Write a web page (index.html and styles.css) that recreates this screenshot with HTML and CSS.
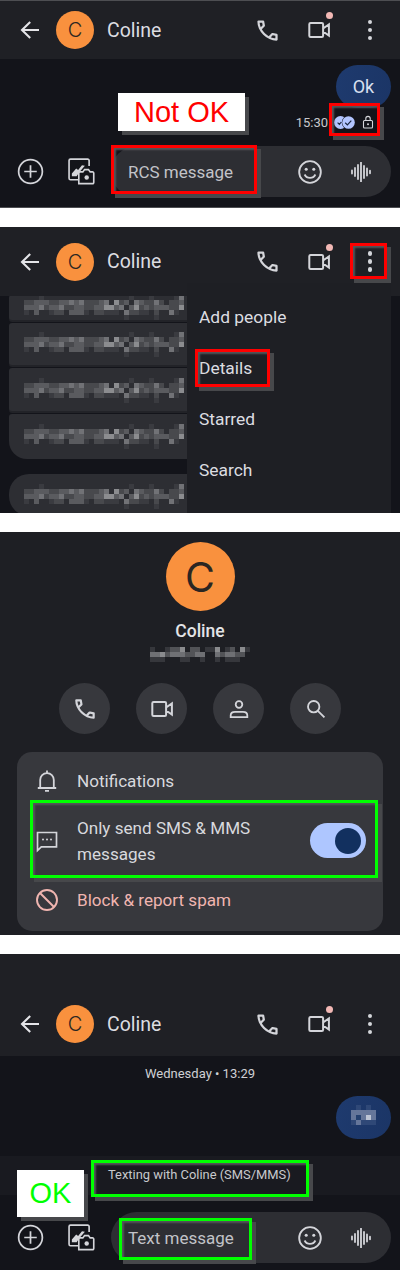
FILE: index.html
```html
<!DOCTYPE html>
<html lang="en">
<head>
<meta charset="utf-8">
<title>Messages: RCS to SMS</title>
<link rel="stylesheet" href="styles.css">
</head>
<body>
<svg class="sprite" aria-hidden="true">
  <symbol id="i-back" viewBox="0 0 24 24"><path d="M21 12H4.500M12.200 4 4 12l8.200 8" fill="none" stroke="currentColor" stroke-width="2.100"/></symbol>
  <symbol id="i-phone" viewBox="0 0 24 24"><path fill="currentColor" d="M19.95 21q-3.125 0-6.175-1.362-3.05-1.363-5.55-3.863-2.5-2.5-3.862-5.55Q3 7.175 3 4.05q0-.45.3-.75t.75-.3H8.1q.35 0 .625.238.275.237.325.562l.65 3.5q.05.4-.025.675-.075.275-.275.475L6.975 10.9q.5.925 1.187 1.787.688.863 1.513 1.663.775.775 1.625 1.438.85.662 1.8 1.212l2.35-2.35q.225-.225.588-.337.362-.113.712-.063l3.45.7q.35.1.575.363.225.262.225.587v4.05q0 .45-.3.75t-.75.3ZM6.025 9l1.65-1.65L7.25 5H5.025q.125 1.025.35 2.025.225 1 .65 1.975Zm8.95 8.95q.975.425 1.988.675 1.012.25 2.037.325v-2.2l-2.35-.475Z"/></symbol>
  <symbol id="i-video" viewBox="0 0 24 24"><path d="M3.600 5h11.200a1.300 1.300 0 0 1 1.300 1.300v11.400a1.300 1.300 0 0 1-1.300 1.300H3.600a1.300 1.300 0 0 1-1.300-1.300V6.300a1.300 1.300 0 0 1 1.300-1.300ZM16.100 10.500 21.900 6.500v11l-5.800-4" fill="none" stroke="currentColor" stroke-width="2"/></symbol>
  <symbol id="i-person" viewBox="0 0 24 24"><circle cx="12" cy="7.500" r="3.300" fill="none" stroke="currentColor" stroke-width="1.800"/><path d="M8 14.800h8c2.500 0 4.300 1.500 4.300 3.500v1.800H3.700v-1.800c0-2 1.800-3.500 4.300-3.500Z" fill="none" stroke="currentColor" stroke-width="1.800"/></symbol>
  <symbol id="i-search" viewBox="0 0 24 24"><circle cx="9.500" cy="9.500" r="6.200" fill="none" stroke="currentColor" stroke-width="2"/><path d="m14 14 7.200 7.200" fill="none" stroke="currentColor" stroke-width="2"/></symbol>
  <symbol id="i-bell" viewBox="0 0 24 24"><path d="M5.200 18.500V11c0-3.800 2.900-6.900 6.800-6.900s6.800 3.100 6.800 6.900v7.500M2.800 19h18.400M12 1.500v2.600M10 21.800h4" fill="none" stroke="currentColor" stroke-width="1.800"/></symbol>
  <symbol id="i-chat" viewBox="0 0 24 24"><path d="M2.500 3.500h19v14.300H6.300L2.500 21.500Z" fill="none" stroke="currentColor" stroke-width="1.700"/><circle cx="8" cy="10.500" r="1" fill="currentColor"/><circle cx="12" cy="10.500" r="1" fill="currentColor"/><circle cx="16" cy="10.500" r="1" fill="currentColor"/></symbol>
  <symbol id="i-block" viewBox="0 0 24 24"><circle cx="12" cy="12" r="10" fill="none" stroke="currentColor" stroke-width="1.900"/><path d="m5 5 14 14" fill="none" stroke="currentColor" stroke-width="1.900"/></symbol>
  <symbol id="i-plus" viewBox="0 0 28 28"><circle cx="14" cy="14" r="12.300" fill="none" stroke="currentColor" stroke-width="1.800"/><path d="M14 7.500v13M7.500 14h13" fill="none" stroke="currentColor" stroke-width="1.800"/></symbol>
  <symbol id="i-gallery" viewBox="0 0 28 28"><path d="M10.500 22.500H2.600a1.500 1.500 0 0 1-1.500-1.500V2.600a1.500 1.500 0 0 1 1.500-1.500h17.800a1.500 1.500 0 0 1 1.500 1.500v5.600" fill="none" stroke="currentColor" stroke-width="1.700"/><path d="M4 19v-3l4.500-5 2 1.500 4-5 3 .5-6 7-2.500 4Z" fill="currentColor"/><path d="M11.500 26.800v-11a1.200 1.200 0 0 1 1.200-1.200h3l1.800-2.400h4l1.800 2.400h2.500a1.200 1.200 0 0 1 1.200 1.200v9.800a1.200 1.200 0 0 1-1.200 1.200Z" fill="none" stroke="currentColor" stroke-width="1.700" transform="translate(-.3 -.2)"/><circle cx="19.400" cy="20.300" r="2.300" fill="currentColor"/></symbol>
  <symbol id="i-emoji" viewBox="0 0 24 24"><circle cx="12" cy="12" r="10" fill="none" stroke="currentColor" stroke-width="1.700"/><circle cx="8.500" cy="9.500" r="1.400" fill="currentColor"/><circle cx="15.500" cy="9.500" r="1.400" fill="currentColor"/><path d="M7 14.300c1 2 2.800 3.100 5 3.100s4-1.100 5-3.100" fill="none" stroke="currentColor" stroke-width="1.600"/></symbol>
  <symbol id="i-wave" viewBox="0 0 20 20"><path d="M1 8.500v3M4 6v8M7 3v14M10 0.500v19M13 4v12M16 6.500v7M19 8.700v2.600" fill="none" stroke="currentColor" stroke-width="1.800" stroke-linecap="round"/></symbol>
  <symbol id="i-lock" viewBox="0 0 12 14"><rect x="1.500" y="5.500" width="9" height="7.500" rx="1" fill="none" stroke="currentColor" stroke-width="1.100"/><path d="M3.800 5.500V3.600a2.200 2.200 0 0 1 4.400 0v1.900" fill="none" stroke="currentColor" stroke-width="1.100"/><circle cx="6" cy="9.200" r="1" fill="currentColor"/></symbol>
  <symbol id="i-checks" viewBox="0 0 21 13"><circle cx="6.500" cy="6.500" r="6.500" fill="#b2c5ff"/><circle cx="14.500" cy="6.500" r="6.800" fill="#13141a"/><circle cx="14.500" cy="6.500" r="6.300" fill="#b2c5ff"/><path d="m3.600 6.600 1.800 1.800 1.900-2.400M11.200 6.800l2.200 2.100 3.900-4.200" fill="none" stroke="#1a2740" stroke-width="1.200"/></symbol>
  <symbol id="m-text" viewBox="0 0 165 25"><g fill="none" stroke-width="5" shape-rendering="crispEdges">
    <path stroke="#3a3b40" d="M15 2.500h5M105 2.500h5M125 2.500h5M150 2.500h5M0 17.500h5M25 17.500h15M60 17.500h5M80 17.500h15M115 17.500h10M145 17.500h10M100 22.500h5M130 22.500h5"/>
    <path stroke="#48494d" d="M0 7.500h10M25 7.500h10M60 7.500h15M95 7.500h5M120 7.500h20M145 7.500h10M15 12.500h10M40 12.500h10M60 12.500h10M80 12.500h5M115 12.500h5M125 12.500h5M145 12.500h15M30 17.500h10M70 17.500h10M105 17.500h10M130 17.500h5"/>
    <path stroke="#5a5b5f" d="M10 7.500h15M35 7.500h10M50 7.500h5M75 7.500h5M100 7.500h5M115 7.500h5M155 7.500h5M0 12.500h15M25 12.500h15M50 12.500h10M70 12.500h10M85 12.500h10M105 12.500h10M120 12.500h5M130 12.500h15M10 17.500h5M45 17.500h15"/>
    <path stroke="#717276" d="M45 7.500h5M55 7.500h5M80 7.500h5M110 7.500h5M15 12.500h5M35 12.500h5M95 12.500h5M100 17.500h5M130 7.500h5M145 17.500h5M155 2.500h5"/>
    <path stroke="#8b8c8f" d="M80 12.500h10M90 7.500h5M110 12.500h5M155 12.500h5"/>
  </g></symbol>
  <symbol id="m-number" viewBox="0 0 100 15"><g fill="none" stroke-width="5" shape-rendering="crispEdges">
    <path stroke="#36373c" d="M0 2.500h5M15 2.500h5M55 2.500h10M75 2.500h5M95 2.500h5M0 12.500h15M30 12.500h10M50 12.500h5M65 12.500h5M75 12.500h15"/>
    <path stroke="#525357" d="M20 2.500h10M40 2.500h10M80 2.500h5M15 7.500h5M35 7.500h10M70 7.500h5M85 7.500h10"/>
    <path stroke="#6f7074" d="M0 7.500h10M20 7.500h15M45 7.500h10M65 7.500h5M75 7.500h10"/>
    <path stroke="#8a8b8e" d="M30 2.500h5M65 2.500h5M90 2.500h5M10 7.500h5"/>
  </g></symbol>
  <symbol id="m-bubble" viewBox="0 0 25 25"><g fill="none" stroke-width="5" shape-rendering="crispEdges">
    <path stroke="#2f4877" d="M5 2.500h5M15 2.500h5M0 17.500h5M10 17.500h15"/>
    <path stroke="#65769a" d="M0 7.500h25M0 12.500h5M10 12.500h5M20 12.500h5M5 17.500h5"/>
    <path stroke="#bcc4d4" d="M15 12.500h5"/>
    <path stroke="#24406f" d="M5 12.500h5"/>
  </g></symbol>
</svg>

<section class="panel panel-rcs">
  <header class="topbar">
    <svg class="ico back"><use href="#i-back"/></svg>
    <span class="avatar">C</span>
    <span class="name">Coline</span>
    <div class="actions">
      <span class="action"><svg class="ico phone"><use href="#i-phone"/></svg></span>
      <span class="action badge"><svg class="ico video"><use href="#i-video"/></svg></span>
      <span class="action"><span class="dots"></span></span>
    </div>
  </header>
  <div class="thread">
    <div class="sent">Ok</div>
    <div class="meta">
      <span>15:30</span>
      <svg class="checks"><use href="#i-checks"/></svg>
      <svg class="lock"><use href="#i-lock"/></svg>
    </div>
  </div>
  <div class="composer">
    <svg class="ico plus"><use href="#i-plus"/></svg>
    <svg class="ico gallery"><use href="#i-gallery"/></svg>
    <div class="field">
      <span class="placeholder">RCS message</span>
      <svg class="ico emoji"><use href="#i-emoji"/></svg>
      <svg class="ico wave"><use href="#i-wave"/></svg>
    </div>
  </div>
  <div class="label label-bad label-notok">Not OK</div>
  <div class="mark mark-red m-status"></div>
  <div class="mark mark-red m-rcs"></div>
</section>

<section class="panel panel-menu">
  <header class="topbar">
    <svg class="ico back"><use href="#i-back"/></svg>
    <span class="avatar">C</span>
    <span class="name">Coline</span>
    <div class="actions">
      <span class="action"><svg class="ico phone"><use href="#i-phone"/></svg></span>
      <span class="action badge"><svg class="ico video"><use href="#i-video"/></svg></span>
      <span class="action"><span class="dots"></span></span>
    </div>
  </header>
  <div class="received-list">
    <div class="received r1"><svg class="mosaic"><use href="#m-text"/></svg></div>
    <div class="received r2"><svg class="mosaic"><use href="#m-text"/></svg></div>
    <div class="received r3"><svg class="mosaic"><use href="#m-text"/></svg></div>
    <div class="received r4"><svg class="mosaic"><use href="#m-text"/></svg></div>
    <div class="received r5"><svg class="mosaic"><use href="#m-text"/></svg></div>
  </div>
  <ul class="menu">
    <li>Add people</li>
    <li>Details</li>
    <li>Starred</li>
    <li>Search</li>
  </ul>
  <div class="mark mark-red m-more"></div>
  <div class="mark mark-red m-details"></div>
</section>

<section class="panel panel-details">
  <div class="profile">
    <span class="avatar avatar-large">C</span>
    <h1 class="profile-name">Coline</h1>
    <svg class="number"><use href="#m-number"/></svg>
    <div class="quick">
      <span class="quick-btn"><svg class="ico q-phone"><use href="#i-phone"/></svg></span>
      <span class="quick-btn"><svg class="ico q-video"><use href="#i-video"/></svg></span>
      <span class="quick-btn"><svg class="ico q-person"><use href="#i-person"/></svg></span>
      <span class="quick-btn"><svg class="ico q-search"><use href="#i-search"/></svg></span>
    </div>
  </div>
  <div class="card">
    <div class="row row-notif">
      <svg class="ico row-ico"><use href="#i-bell"/></svg>
      <span>Notifications</span>
    </div>
    <div class="row row-sms">
      <svg class="ico row-ico"><use href="#i-chat"/></svg>
      <span class="row-text">Only send SMS &amp; MMS<br>messages</span>
      <span class="toggle"><span class="knob"></span></span>
    </div>
    <div class="row row-block">
      <svg class="ico row-ico"><use href="#i-block"/></svg>
      <span>Block &amp; report spam</span>
    </div>
  </div>
  <div class="mark mark-green m-sms"></div>
</section>

<section class="panel panel-sms">
  <header class="topbar">
    <svg class="ico back"><use href="#i-back"/></svg>
    <span class="avatar">C</span>
    <span class="name">Coline</span>
    <div class="actions">
      <span class="action"><svg class="ico phone"><use href="#i-phone"/></svg></span>
      <span class="action badge"><svg class="ico video"><use href="#i-video"/></svg></span>
      <span class="action"><span class="dots"></span></span>
    </div>
  </header>
  <div class="thread thread-sms">
    <p class="timestamp">Wednesday • 13:29</p>
    <div class="sent sent-hidden"><svg class="mosaic-small"><use href="#m-bubble"/></svg></div>
  </div>
  <p class="notice">Texting with Coline (SMS/MMS)</p>
  <div class="composer">
    <svg class="ico plus"><use href="#i-plus"/></svg>
    <svg class="ico gallery"><use href="#i-gallery"/></svg>
    <div class="field">
      <span class="placeholder">Text message</span>
      <svg class="ico emoji"><use href="#i-emoji"/></svg>
      <svg class="ico wave"><use href="#i-wave"/></svg>
    </div>
  </div>
  <div class="label label-good label-ok">OK</div>
  <div class="mark mark-green m-notice"></div>
  <div class="mark mark-green m-text"></div>
</section>
</body>
</html>
```
FILE: styles.css
```css
* { box-sizing: border-box; }
html, body { margin: 0; padding: 0; background: #fff; }
body {
  width: 400px;
  height: 1270px;
  overflow: hidden;
  font-family: Roboto, "Noto Sans", sans-serif;
  color: #d9dade;
}
.sprite { position: absolute; width: 0; height: 0; overflow: hidden; }
.ico { display: block; color: #d4d5da; flex: none; }

.panel { position: relative; overflow: hidden; display: flex; flex-direction: column; background: #13141a; }
.panel-rcs { height: 208px; border-top: 1px solid #4d4e52; border-bottom: 1px solid #4d4e52; }
.panel-menu { height: 286px; margin-top: 19px; }
.panel-details { height: 403px; margin-top: 19px; background: #1e1f24; }
.panel-sms { height: 316px; margin-top: 19px; }

/* top bar */
.topbar { flex: none; display: flex; align-items: center; height: 69px; padding: 0 5px 0 18px; background: #1f2025; }
.panel-rcs .topbar { height: 58px; }
.panel-sms .topbar { height: 102px; padding-top: 38px; }
.back { width: 24px; height: 24px; color: #e4e4e8; }
.avatar {
  flex: none;
  width: 38px;
  height: 38px;
  margin-left: 14px;
  border-radius: 50%;
  background: #f9913e;
  color: #2b2622;
  display: flex;
  align-items: center;
  justify-content: center;
  font-family: Inter, Roboto, sans-serif;
  font-size: 20px;
  font-weight: 300;
}
.name { margin-left: 13px; font-size: 19.5px; color: #dcdde1; }
.actions { margin-left: auto; display: flex; }
.action { position: relative; width: 52px; height: 40px; display: flex; align-items: center; justify-content: center; }
.action:last-child { width: 50px; }
.phone { width: 27px; height: 27px; }
.video { width: 24px; height: 24px; }
.badge::after { content: ""; position: absolute; top: 2px; right: 12px; width: 7px; height: 7px; border-radius: 50%; background: #f2b8b5; }
.dots, .dots::before, .dots::after { display: block; width: 4.5px; height: 4.5px; border-radius: 50%; background: #d4d5da; }
.dots { position: relative; }
.dots::before, .dots::after { content: ""; position: absolute; left: 0; }
.dots::before { top: -8px; }
.dots::after { top: 8px; }

/* thread */
.thread { flex: 1; display: flex; flex-direction: column; align-items: flex-end; padding: 6px 9px 0; min-height: 0; }
.sent {
  width: 55px;
  height: 43px;
  border-radius: 22px;
  background: linear-gradient(100deg, #1e3a6e, #1b3566);
  color: #d8e0ef;
  font-size: 18px;
  display: flex;
  align-items: center;
  justify-content: center;
}
.meta { display: flex; align-items: center; margin-top: 6px; padding-right: 17px; font-size: 13px; color: #c8c9cd; height: 16px; }
.checks { width: 21px; height: 13px; margin-left: 6px; }
.lock { width: 12px; height: 14px; margin-left: 7px; color: #d4d5da; }

/* composer */
.composer { flex: none; display: flex; align-items: center; height: 61px; padding: 0 9px 10px 17px; }
.plus { width: 27px; height: 27px; }
.gallery { width: 27px; height: 27px; margin-left: 24px; }
.field { flex: 1; height: 51px; margin-left: 16px; border-radius: 26px; background: #2d2e33; display: flex; align-items: center; padding: 0 20px 0 17px; }
.placeholder { font-size: 17px; color: #c2c3c8; }
.emoji { width: 26px; height: 26px; margin-left: auto; }
.wave { width: 20px; height: 20px; margin-left: 28px; }

/* received bubbles */
.received-list { flex: 1; display: flex; flex-direction: column; padding-left: 9px; overflow: hidden; }
.received { flex: none; width: 190px; padding: 10px 0 0 15px; background: #2d2e33; border-radius: 3px 0 0 3px; margin-bottom: 3px; box-shadow: 0 2px 0 #222328; }
.mosaic { display: block; width: 165px; height: 25px; }
.r1 { height: 25px; padding-top: 0; margin-top: -1px; }
.r2 { height: 42px; padding-top: 9px; }
.r3 { height: 43px; padding-top: 10px; }
.r4 { height: 45px; padding-top: 10px; border-bottom-left-radius: 18px; margin-bottom: 15px; box-shadow: none; }
.r5 { height: 42px; border-radius: 20px 0 0 20px; padding-top: 10px; box-shadow: none; }

/* menu */
.menu { position: absolute; left: 187px; top: 56px; right: 9px; bottom: 0; margin: 0; padding: 8px 0 0 12px; list-style: none; background: #1e1f24; }
.menu li { height: 51px; display: flex; align-items: center; font-size: 17.4px; color: #dcdde1; }

/* details */
.profile { display: flex; flex-direction: column; align-items: center; padding-top: 10px; }
.avatar-large { width: 69px; height: 69px; margin: 0; font-size: 41px; font-weight: 400; }
.profile-name { margin: 10px 0 0; font-size: 17.5px; line-height: 21px; font-weight: 500; color: #e3e4e7; }
.number { display: block; width: 100px; height: 15px; margin-top: 5px; }
.quick { display: flex; gap: 26px; margin-top: 21px; }
.quick-btn { width: 51px; height: 51px; border-radius: 50%; background: #37383d; display: flex; align-items: center; justify-content: center; }
.q-phone { width: 26px; height: 26px; }
.q-video { width: 24px; height: 24px; }
.q-person { width: 24px; height: 24px; }
.q-search { width: 22px; height: 22px; }
.card { margin: 18px 17px 0; height: 179px; border-radius: 15px; background: #37383d; padding-top: 7px; }
.row { display: flex; align-items: center; padding-left: 18px; font-size: 17.1px; color: #d8d9dd; }
.row-ico { width: 24px; height: 24px; margin-right: 18px; }
.row-notif { height: 44px; }
.row-sms { height: 76px; position: relative; }
.row-text { line-height: 26px; }
.row-block { height: 42px; color: #f0b5b0; }
.row-block .row-ico { color: #f0b5b0; }
.toggle { position: absolute; left: 293px; top: 20px; width: 56px; height: 35px; border-radius: 18px; background: #aec6ff; }
.knob { position: absolute; left: 25px; top: 5px; width: 26px; height: 26px; border-radius: 50%; background: #12305f; }

/* sms panel */
.thread-sms { padding: 0 9px; }
.timestamp { align-self: center; margin: 10px 0 0; font-size: 13px; line-height: 16px; color: #cfd0d4; }
.sent-hidden { margin-top: 14px; }
.mosaic-small { display: block; width: 25px; height: 25px; }
.notice { flex: none; height: 39px; margin: 0; padding: 10px 0 0 108px; font-size: 12.9px; line-height: 18px; background: #191a20; color: #c8c9cd; }
.panel-sms .composer { height: 75px; padding-top: 17px; padding-bottom: 7px; }

/* annotations */
.mark { position: absolute; border-width: 3px; border-style: solid; box-shadow: 4px 4px 0 #47484b, inset 2px 2px 2px #55565a; }
.mark-red { border-color: #f00; }
.mark-green { border-color: #0f0; }
.label { position: absolute; background: #fff; font-family: "Liberation Sans", Arial, sans-serif; font-size: 29px; display: flex; align-items: center; justify-content: center; box-shadow: 4px 4px 0 #47484b; }
.label-bad { color: #f00; }
.label-good { color: #0f0; }
.label-notok { left: 118px; top: 92px; width: 127px; height: 38px; }
.label-ok { left: 17px; top: 216px; width: 67px; height: 47px; }
.m-status { left: 329px; top: 102px; width: 51px; height: 33px; }
.m-rcs { left: 111px; top: 144px; width: 146px; height: 49px; }
.m-more { left: 350px; top: 16px; width: 37px; height: 36px; }
.m-details { left: 195px; top: 122px; width: 75px; height: 38px; }
.m-sms { left: 30px; top: 268px; width: 348px; height: 78px; }
.m-notice { left: 91px; top: 206px; width: 218px; height: 37px; }
.m-text { left: 119px; top: 264px; width: 133px; height: 42px; }
```
